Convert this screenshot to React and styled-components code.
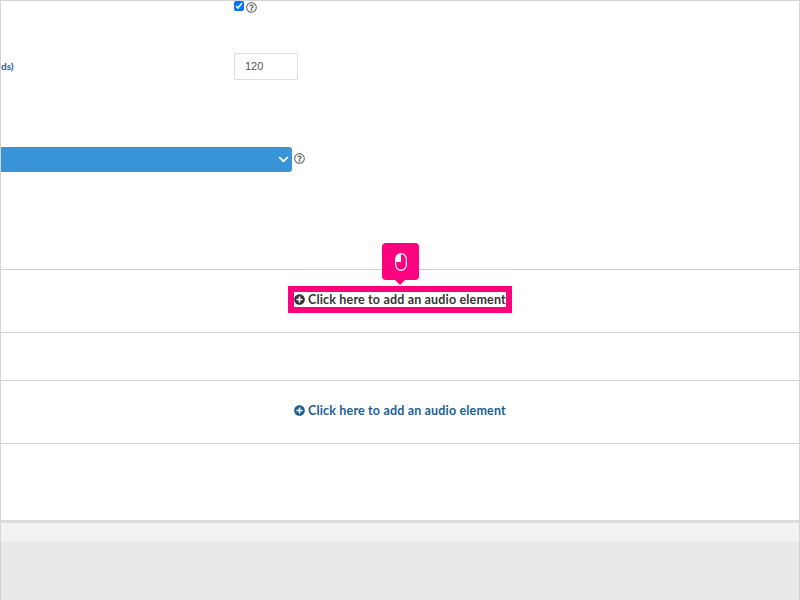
import React from 'react';
import styled, { createGlobalStyle } from 'styled-components';
import { FaPlusCircle, FaRegQuestionCircle, FaChevronDown } from 'react-icons/fa';

const GlobalStyle = createGlobalStyle`
  html, body {
    margin: 0;
    padding: 0;
    background: #e9e9e9;
    font-family: Lato, Arial, sans-serif;
  }
`;

const Page = styled.div`
  width: 800px;
  height: 600px;
  overflow: hidden;
  background: #e9e9e9;
`;

const Panel = styled.div`
  box-sizing: border-box;
  height: 523px;
  background: #fff;
  border: 1px solid #d4d4d4;
  border-bottom: 3px solid #dcdcdc;
`;

const Settings = styled.div`
  height: 268px;
  display: flex;
  flex-direction: column;
`;

const CheckRow = styled.div`
  display: flex;
  align-items: flex-start;
  gap: 2px;
  padding-left: 233px;
  height: 52px;
`;

const Check = styled.input`
  width: 10px;
  height: 10px;
  margin: 0;
  accent-color: #0075ff;
`;

const Help = styled(FaRegQuestionCircle)`
  width: 11px;
  height: 11px;
  color: #666;
  flex: none;
`;

const CheckHelp = styled(Help)`
  margin-top: 1px;
`;

const InputRow = styled.div`
  display: grid;
  grid-template-columns: 233px 64px;
  align-items: center;
  height: 27px;
`;

const Label = styled.label`
  font-size: 10px;
  font-weight: 700;
  color: #1b5e94;
  margin-top: -2px;
`;

const NumberInput = styled.input`
  box-sizing: border-box;
  width: 64px;
  height: 27px;
  padding: 0 10px 2px;
  border: 1px solid #dedede;
  outline: none;
  background: #fff;
  color: #555;
  font-family: "Liberation Sans", Arial, sans-serif;
  font-size: 11px;
`;

const SelectRow = styled.div`
  display: flex;
  align-items: center;
  gap: 2px;
  margin-top: 67px;
`;

const Select = styled.div`
  box-sizing: border-box;
  width: 291px;
  height: 25px;
  padding-right: 3px;
  display: flex;
  align-items: center;
  justify-content: flex-end;
  background: #3995d8;
  border-radius: 0 3px 3px 0;
  color: #fff;

  svg {
    width: 11px;
    height: 11px;
  }
`;

const SelectHelp = styled(Help)`
  margin-top: -3px;
`;

const AudioRow = styled.div`
  position: relative;
  box-sizing: border-box;
  height: ${(p) => p.$height}px;
  border-top: 1px solid #cfcfcf;
  display: flex;
  justify-content: center;
  padding-top: ${(p) => p.$top || 0}px;
`;

const AddLink = styled.a`
  display: flex;
  align-items: center;
  gap: 3px;
  width: 212px;
  height: 15px;
  background: #fff;
  font-size: 12.5px;
  line-height: 13px;
  letter-spacing: 0.17px;
  font-weight: 700;
  white-space: nowrap;
  color: ${(p) => (p.$active ? '#333' : '#1b5e94')};
  outline: ${(p) => (p.$active ? '6px solid #ff007f' : 'none')};

  svg {
    width: 11px;
    height: 11px;
    flex: none;
  }
`;

const LinkText = styled.span`
  margin-top: -1px;
`;

const Pointer = styled.div`
  position: absolute;
  left: 381px;
  top: -27px;
  width: 37px;
  height: 37px;
  display: flex;
  align-items: center;
  justify-content: center;
  background: #ff007f;
  border-radius: 4px;

  &::after {
    content: "";
    position: absolute;
    left: 13px;
    bottom: -5px;
    border-left: 5px solid transparent;
    border-right: 5px solid transparent;
    border-top: 5px solid #ff007f;
  }
`;

const Bottom = styled.div`
  height: 77px;
  border-left: 1px solid #d4d4d4;
  border-right: 1px solid #d4d4d4;
`;

const Band = styled.div`
  height: 18px;
  background: #f1f2f4;
`;

const MouseIcon = () => (
  <svg width="12" height="18" viewBox="0 0 12 18" fill="none">
    <path d="M6 1 A5 5 0 0 0 1 6 V9 H6 Z" fill="#fff" />
    <rect x="0.7" y="0.7" width="10.6" height="16.6" rx="5.3" stroke="#fff" strokeWidth="1.2" />
  </svg>
);

const App = () => {
  return (
    <Page>
      <GlobalStyle />
      <Panel>
        <Settings>
          <CheckRow>
            <Check type="checkbox" defaultChecked />
            <CheckHelp />
          </CheckRow>
          <InputRow>
            <Label>ds)</Label>
            <NumberInput type="text" defaultValue="120" />
          </InputRow>
          <SelectRow>
            <Select><FaChevronDown /></Select>
            <SelectHelp />
          </SelectRow>
        </Settings>
        <AudioRow $height={63} $top={22}>
          <Pointer><MouseIcon /></Pointer>
          <AddLink $active><FaPlusCircle /><LinkText>Click here to add an audio element</LinkText></AddLink>
        </AudioRow>
        <AudioRow $height={48} />
        <AudioRow $height={63} $top={22}>
          <AddLink><FaPlusCircle /><LinkText>Click here to add an audio element</LinkText></AddLink>
        </AudioRow>
        <AudioRow $height={77} />
      </Panel>
      <Bottom>
        <Band />
      </Bottom>
    </Page>
  );
};

export default App;
